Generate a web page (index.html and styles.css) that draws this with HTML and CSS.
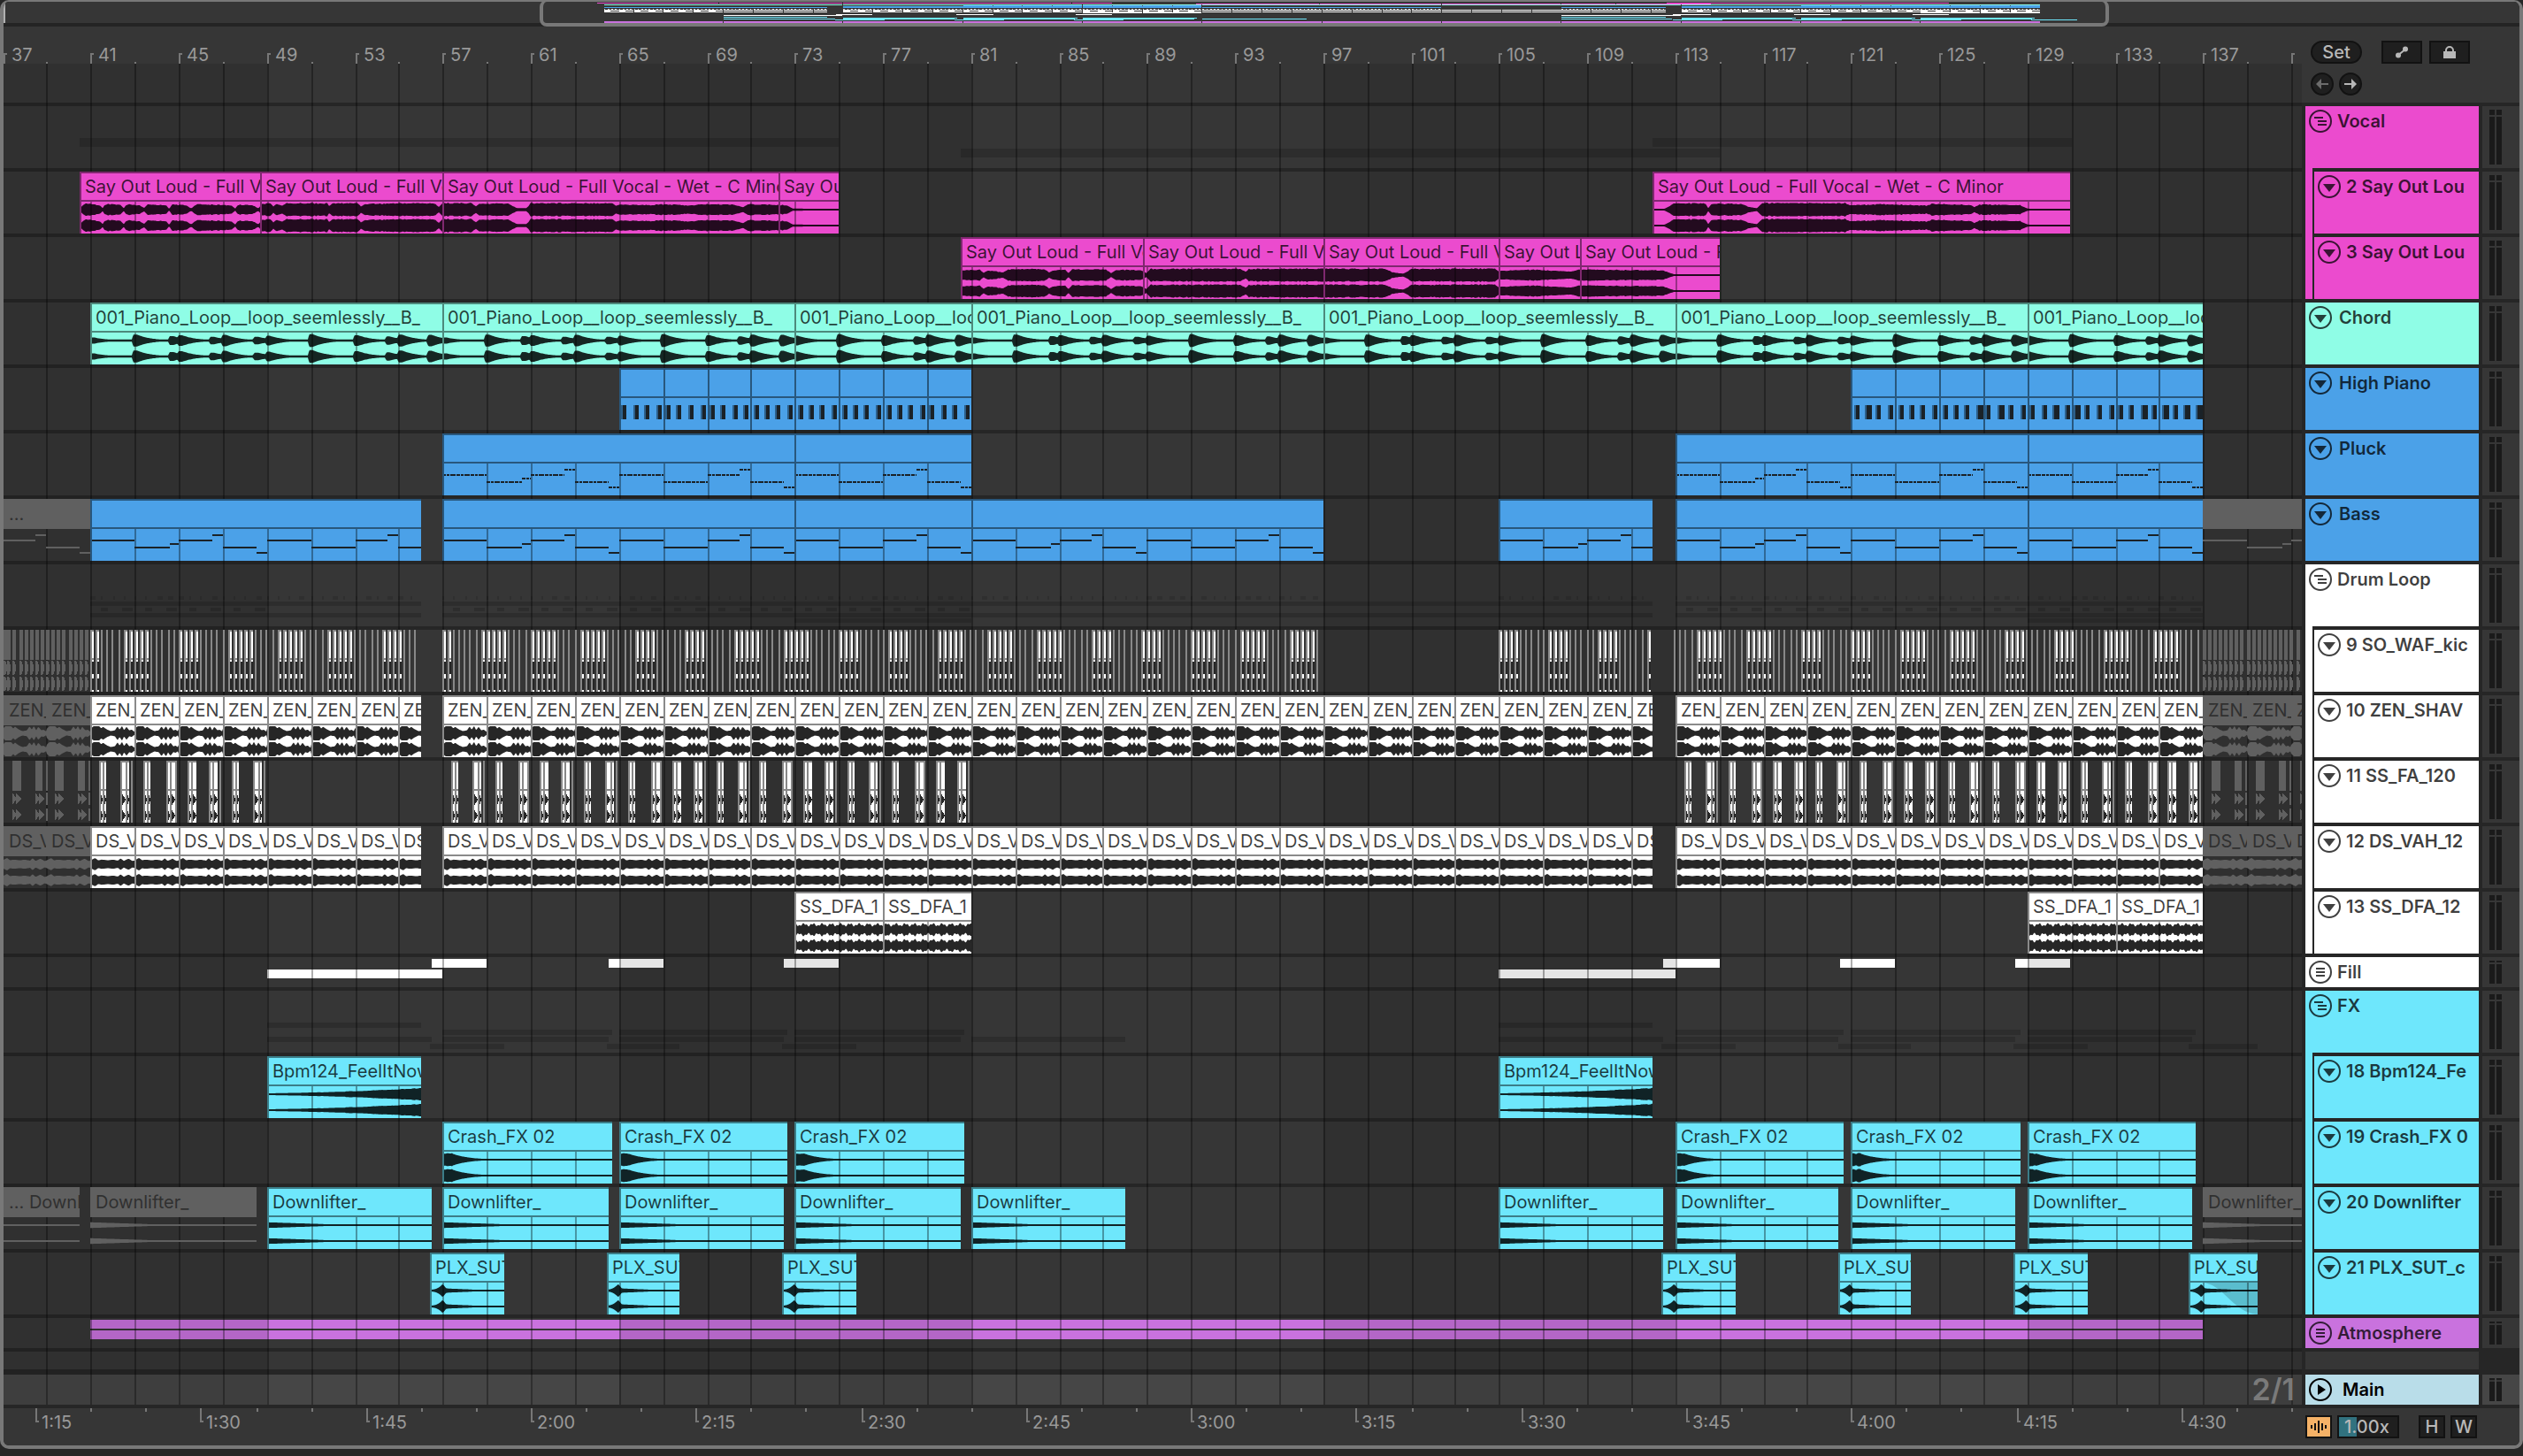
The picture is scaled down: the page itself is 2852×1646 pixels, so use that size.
FILE: index.html
```html
<!DOCTYPE html>
<html lang="en">
<head>
<meta charset="utf-8">
<title>Arrangement</title>
<link rel="stylesheet" href="styles.css">
</head>
<body>
<svg class="symbols" aria-hidden="true">
  <symbol id="i-group" viewBox="0 0 26 26"><circle cx="13" cy="13" r="12"/><path d="M6 9h10M10 13h10M10 17h10"/></symbol>
  <symbol id="i-folded" viewBox="0 0 26 26"><circle cx="13" cy="13" r="12"/><path d="M8 9h10M8 13h10M8 17h10"/></symbol>
  <symbol id="i-open" viewBox="0 0 26 26"><circle cx="13" cy="13" r="12"/><path class="solid" d="M6 10h14l-7 9z"/></symbol>
  <symbol id="i-play" viewBox="0 0 26 26"><circle cx="13" cy="13" r="12"/><path class="solid" d="M10 7v12l9-6z"/></symbol>
</svg>

<main class="frame">
  <section class="overview" aria-label="Overview">
    <svg class="overview-map" id="overview" viewBox="0 0 2844 24" preserveAspectRatio="none" shape-rendering="crispEdges"></svg>
    <div class="overview-window"></div>
  </section>

  <section class="top">
    <div class="top-timeline">
      <div class="ruler bars" id="bar-ruler"></div>
      <div class="scrub" data-grid></div>
    </div>
    <div class="controls">
      <div class="control-row">
        <button class="pill" type="button">Set</button>
        <button class="box automation" type="button" aria-label="Automation mode">
          <svg viewBox="0 0 16 14" width="16" height="14"><path d="M3 11L13 3" stroke="currentColor" stroke-width="2"/><circle cx="4" cy="10.500" r="3"/><circle cx="12" cy="3.500" r="3"/></svg>
        </button>
        <button class="box lock" type="button" aria-label="Lock envelopes">
          <svg viewBox="0 0 16 14" width="16" height="14"><path d="M4 7V5a4 4 0 0 1 8 0v2" fill="none" stroke="currentColor" stroke-width="2"/><path d="M1 6h14v8H1z"/></svg>
        </button>
      </div>
      <div class="control-row arrows">
        <button class="round dim" type="button" aria-label="Previous locator">
          <svg viewBox="0 0 16 14" width="16" height="14"><path d="M7 1v12L1 7z"/><path d="M6 6h9v2H6z"/></svg>
        </button>
        <button class="round" type="button" aria-label="Next locator">
          <svg viewBox="0 0 16 14" width="16" height="14"><path d="M9 1v12l6-6z"/><path d="M1 6h9v2H1z"/></svg>
        </button>
      </div>
    </div>
  </section>

  <section class="tracks" id="tracks">
    <div class="grid" data-grid></div>
  </section>

  <section class="bottom">
    <div class="ruler times" id="time-ruler"></div>
    <div class="footer-controls">
      <button class="box wave-toggle" type="button" aria-label="Waveform zoom">
        <svg viewBox="0 0 20 16" width="20" height="16"><path d="M2 6v4M6 4v8M10 1v14M14 4v8M18 6v4" stroke="#111" stroke-width="2"/></svg>
      </button>
      <input class="box speed" type="text" value="1.00x" aria-label="Waveform vertical zoom">
      <button class="box letter h" type="button">H</button>
      <button class="box letter" type="button">W</button>
    </div>
  </section>
</main>
<script src="app.js"></script>
</body>
</html>
```
FILE: styles.css
```css
* { box-sizing: border-box; }

body {
  margin: 0;
  background: #262626;
  color: #b8b8b8;
  font: 400 20px/28px Inter, "Liberation Sans", sans-serif;
}

button, input { font: inherit; color: inherit; padding: 0; margin: 0; }

.symbols { position: absolute; width: 0; height: 0; }

.frame {
  display: flex;
  flex-direction: column;
  border: 4px solid #787878;
  border-top-width: 2px;
  border-radius: 10px;
  background: #262626;
  overflow: hidden;
}

/* overview strip */
.overview {
  position: relative;
  height: 28px;
  background: #363636;
  border-bottom: 4px solid #242424;
}
.overview-map { display: block; width: 100%; height: 24px; border-left: 2px solid #b0b0b0; }
.overview-window {
  position: absolute;
  top: -2px;
  bottom: -4px;
  left: 21.3%;
  right: 16.3%;
  border: 4px solid #787878;
  border-top-width: 2px;
  border-radius: 8px;
}

/* rulers and top controls */
.top, .bottom { display: grid; grid-template-columns: 1fr 246px; background: #363636; }
.ruler { position: relative; height: 42px; overflow: hidden; color: #999; }
.tick { position: absolute; width: 4px; pointer-events: none; }
.tick.minor { width: 2px; background: #777; }
.bars .tick { bottom: 0; height: 12px; border-left: 2px solid #777; border-top: 2px solid #777; }
.bars .tick.minor { height: 2px; border: 0; }
.times .tick { top: 0; height: 16px; border-left: 2px solid #777; border-bottom: 2px solid #777; }
.times .tick.minor { height: 4px; border: 0; }
.tick-label { position: absolute; line-height: 24px; white-space: nowrap; }
.bars .tick-label { top: 20px; margin-left: 9px; }
.times .tick-label { top: 4px; margin-left: 7px; }

.scrub { position: relative; height: 44px; overflow: hidden; background: #363636; }

.controls { display: flex; flex-direction: column; gap: 10px; padding: 16px 0 0 10px; }
.control-row { display: flex; gap: 8px; }
.control-row.arrows { gap: 6px; }
.pill, .round, .box {
  display: inline-flex;
  align-items: center;
  justify-content: center;
  height: 26px;
  border: 2px solid #121212;
  background: #1f1f1f;
  line-height: 22px;
}
.pill { width: 58px; border-radius: 13px; font-weight: 500; margin-right: 14px; }
.round { width: 26px; border-radius: 13px; }
.box { width: 46px; }
.dim { color: #6c6c6c; }
.controls svg { fill: currentColor; }

/* tracks */
.tracks { position: relative; display: flex; flex-direction: column; gap: 4px; padding: 4px 0; background: #262626; }
.grid { position: absolute; z-index: 1; top: 0; bottom: 4px; left: 0; right: 246px; overflow: hidden; pointer-events: none; }
.band { position: absolute; top: 0; bottom: 0; background: rgba(0, 0, 0, .1); }
.line { position: absolute; top: 0; bottom: 0; width: 2px; background: rgba(0, 0, 0, .32); }

.track { display: grid; grid-template-columns: 1fr 196px 42px; column-gap: 4px; height: 70px; }
.track.small { height: 34px; }
.track.spacer { height: 20px; }
.track.main { margin-top: 2px; }

.lane { position: relative; overflow: hidden; background: #363636; }
.main .lane { background: #464646; }
.lane > svg { display: block; width: 100%; height: 100%; position: relative; z-index: 2; }
.lane > svg.under { z-index: 0; }
.zoom-label { position: absolute; z-index: 2; right: 8px; top: 0; font-size: 34px; line-height: 34px; font-weight: 600; color: #7a7a7a; }

.head { position: relative; display: flex; align-items: flex-start; gap: 8px; padding: 4px; background: var(--c); color: rgba(0, 0, 0, .75); white-space: nowrap; }
.head.group { gap: 6px; }
.head.child { gap: 6px; margin-left: 10px; }
.head.child::before { content: ""; position: absolute; left: -10px; top: -4px; bottom: 0; width: 8px; background: var(--c); }
.head .name { overflow: hidden; font-weight: 600; line-height: 26px; }
.main .head { color: #000; gap: 12px; }
.fold { flex: none; width: 26px; height: 26px; border: 0; background: none; }
.fold svg { display: block; width: 26px; height: 26px; fill: none; stroke: currentColor; stroke-width: 2; }
.solid { fill: currentColor; stroke: none; }
.spacer .head { background: #363636; }

.meter { display: flex; gap: 2px; padding: 4px 8px; background: #363636; }
.meter i { width: 6px; background: linear-gradient(#1a1a1a 6px, #363636 6px, #363636 8px, #1a1a1a 8px); }
.small .meter i { background: linear-gradient(#1a1a1a 2px, #363636 2px, #363636 4px, #1a1a1a 4px); }
.main .meter { background: #464646; }

/* clips */
.clip {
  position: absolute;
  z-index: 2;
  top: 0;
  bottom: 0;
  display: grid;
  grid-template-rows: 32px 1fr;
  overflow: hidden;
  background: var(--c);
  border-left: 2px solid rgba(0, 0, 0, .46);
  border-top: 2px solid rgba(0, 0, 0, .46);
}
.clip-name {
  padding-left: 4px;
  border-bottom: 2px solid rgba(0, 0, 0, .46);
  color: rgba(0, 0, 0, .75);
  line-height: 30px;
  white-space: nowrap;
  overflow: hidden;
}
.clip svg { display: block; width: 100%; height: 36px; }
.clip.muted { background: none; border: 0; grid-template-rows: 34px 1fr; }
.clip.muted .clip-name { background: #606060; border: 0; color: #303030; padding-left: 6px; line-height: 34px; }

/* footer */
.footer-controls { display: flex; gap: 6px; padding: 8px 0 0 4px; }
.wave-toggle { width: 30px; background: #f5b267; }
.speed { width: 70px; padding-left: 6px; font-weight: 500; background: linear-gradient(90deg, #31727f 20px, #1f1f1f 20px); }
.letter { width: 30px; font-weight: 500; }
.letter.h { margin-left: 16px; }
```
FILE: app.js
```js
// Horizontal scale: lane units at the design width of the timeline.
const LANE = 2598;
const BAR = 24.875;
const ORIGIN = 98.5;
const FIRST = 37;
const LAST = 142;

const raw = bar => ORIGIN + (bar - 41) * BAR;
const at = bar => Math.min(LANE, Math.max(0, Math.round(raw(bar) / 2) * 2));
const pct = x => (x / LANE * 100).toFixed(4) + '%';

const PINK = '#eb4bce', MINT = '#8ffde6', BLUE = '#4ba1e8', WHITE = '#ffffff', CYAN = '#6ee7fc', PURPLE = '#c972de';

// Deterministic noise in 0..1
const noise = n => { const s = Math.sin(n * 12.9898) * 43758.5453; return s - Math.floor(s); };

const interp = (points, x) => {
  if (x <= points[0][0]) return points[0][1];
  for (let i = 1; i < points.length; i++) {
    if (x <= points[i][0]) {
      const [x0, y0] = points[i - 1], [x1, y1] = points[i];
      return y0 + (y1 - y0) * (x - x0) / (x1 - x0);
    }
  }
  return points[points.length - 1][1];
};

const rough = (v, x, k) => v < .25 ? v : v * (1 - k * noise(Math.round(x / 2)));

const VOCAL = [
  [90,.1],[94,.7],[97,.85],[106,.8],[113,.6],[116,.2],[118,.6],[122,.8],[136,.7],[140,.2],[142,.6],[146,.75],[158,.6],[163,.25],
  [167,.75],[188,.65],[191,.15],[195,.75],[210,.65],[216,.2],[222,.75],[238,.75],[262,.6],[266,.15],[269,.7],[285,.7],[292,.2],
  [296,.85],[306,.9],[309,.5],[312,.85],[318,.6],[324,.9],[352,.95],[370,.9],[372,.6],[376,.9],[404,.95],[408,.5],[414,.85],
  [470,.95],[492,.9],[496,.4],[500,.95],[533,.95],[538,.5],[542,.85],[574,.9],[580,.5],[585,.2],[595,.2],[600,.95],[692,.95],
  [696,.55],[700,.75],[736,.65],[745,.8],[785,.6],[792,.8],[830,.75],[840,.35],[846,.8],[890,.65],[896,.15],[948,.1]];
const VOCAL_B = [
  [1086,.7],[1107,.8],[1112,.35],[1117,.7],[1134,.4],[1141,.85],[1180,.9],[1186,.4],[1190,.7],[1204,.8],[1208,.3],[1212,.85],
  [1250,.8],[1256,.3],[1262,.8],[1290,.7],[1296,.3],[1300,.9],[1402,.95],[1408,.5],[1412,.9],[1496,.95],[1566,.9],[1574,.4],
  [1586,.2],[1596,.9],[1690,.95],[1694,.6],[1730,.8],[1776,.5],[1784,.8],[1880,.7],[1892,.12],[1944,.1]];
const VOCAL_C = [
  [1868,.1],[1882,.14],[1893,.95],[1928,.9],[1931,.2],[1935,.85],[1968,.85],[1977,.4],[1986,.2],[1992,.95],[2086,.95],
  [2090,.65],[2130,.8],[2178,.6],[2184,.85],[2228,.7],[2232,.35],[2238,.75],[2284,.65],[2292,.14],[2340,.1]];
const CHORD_HITS = [[0,.5],[1.95,.95],[3.6,.7],[4,.85],[5.45,.6],[6,.9],[7.45,.6],[8,.75],[9.95,1],[12,.85],[13.45,.65],[14,.95],[15.35,.9]];
const ZEN = [[0,.6],[.12,.95],[.4,.95],[.48,.65],[.56,.9],[.72,.55],[.9,.3],[1.1,.4],[1.22,.95],[1.32,.5],[1.42,1],[1.52,.4],[1.62,.9],[1.76,.4],[1.86,.5],[2,.2]];
const DS = [[0,.6],[.2,.95],[.34,.6],[.5,.7],[.8,.6],[1,.7],[1.25,.55],[1.36,.9],[1.5,.5],[1.72,.85],[1.9,.5],[2,.55]];

const vocal = points => b => { const x = raw(b) + 4; return rough(interp(points, x), x, .15) * .92; };

// Amplitude at a bar position, for each kind of sample
const WAVES = {
  vocal: vocal(VOCAL),
  vocalB: vocal(VOCAL_B),
  vocalC: vocal(VOCAL_C),
  chord: (b, clip) => {
    const p = ((b - clip.from + (clip.offset || 0)) % 16 + 16) % 16;
    return CHORD_HITS.reduce((m, [h, a]) => {
      const d = p - h;
      if (d < -.08) return m;
      const v = d < 0 ? 1 + d * 8 : d < .15 ? 1 : Math.exp(-(d - .15) * 1.6);
      return Math.max(m, a * .8 * v);
    }, .13);
  },
  zen: b => interp(ZEN, (b - 1) % 2) * .92,
  ds: b => interp(DS, (b - 1) % 2) * .82,
  dfa: b => .62 + .14 * Math.sin(b * 15) + .1 * Math.sin(b * 37 + 1),
  rise: (b, c) => { const t = (b - c.from) / 7; return rough(.12 + .7 * Math.pow(t, 1.6), b * 12, .12); },
  crash: (b, c) => { const t = b - c.from; return t < .45 ? .85 - .12 * noise(Math.round(b * 9)) : Math.max(.12, .75 * Math.exp(-(t - .45) * 1.4)); },
  down: (b, c) => { const t = b - c.from; return Math.max(.12, .36 - t * .09); },
  plx: (b, c) => { const t = b - c.from; return t < .55 ? .12 + .7 * Math.pow(t / .55, 2.5) : Math.max(.12, t < .72 ? .82 - (t - .55) * 3.2 : .27 - (t - .72) * .12); },
  tail: () => .1
};

// Rows of the two-bar note pattern: start, end, height
const NOTES = [
  [0,2,12],[2,3.6,20],[3.6,4,16],[4,5.5,12],[5.5,6,6],[6,7.5,20],[7.5,8,26],
  [8,10,12],[10,12,20],[12,13.5,12],[13.5,14,6],[14,15.5,20],[15.5,16,26]];

const series = (from, to, step, props) => {
  const list = [];
  for (let b = from; b < to; b += step) list.push({ from: b, to: Math.min(b + step, to), ...props });
  return list;
};
const cut = (points, props) => points.slice(1).map((to, i) => ({ from: points[i], to, ...props }));

const VOX = 'Say Out Loud - Full Vocal - Wet - C Minor';
const loops = (name, wave) => [
  ...series(37, 41, 2, { name, wave, muted: true }), ...series(41, 56, 2, { name, wave }),
  ...series(57, 112, 2, { name, wave }), ...series(113, 137, 2, { name, wave }),
  ...series(137, LAST, 2, { name, wave, muted: true })];
const crash = [57, 65, 73, 113, 121, 129].map(b => ({ from: b, to: b + 7.67, name: 'Crash_FX 02', wave: 'crash' }));
const down = [[49,56.5],[57,64.5],[65,72.5],[73,80.5],[81,88],[105,112.45],[113,120.45],[121,128.45],[129,136.5]]
  .map(([from, to]) => ({ from, to, name: 'Downlifter_', wave: 'down' }));
const plx = [56.44, 64.42, 72.42, 112.4, 120.38, 128.4].map(b => ({ from: b, to: b + 3.37, name: 'PLX_SUT', wave: 'plx' }));

const TRACKS = [
  { name: 'Vocal', color: PINK, kind: 'group', icon: 'group' },
  { name: '2 Say Out Lou', color: PINK, kind: 'child', y: 1, clips: [
    ...cut([40.52, 48.72, 57, 72.28, 75], { name: VOX, wave: 'vocal' }),
    { from: 112, to: 130.95, name: VOX, wave: 'vocalC' }] },
  { name: '3 Say Out Lou', color: PINK, kind: 'child', y: 2, clips: cut([80.56, 88.85, 97, 104.97, 108.64, 115], { name: VOX, wave: 'vocalB' }) },
  { name: 'Chord', color: MINT, y: 3, clips: cut([41, 57, 73, 81, 97, 113, 129, 137], { name: '001_Piano_Loop__loop_seemlessly__B_', wave: 'chord' }) },
  { name: 'High Piano', color: BLUE, y: 4, clips: [...series(65, 81, 2, { keys: true }), ...series(121, 137, 2, { keys: true })] },
  { name: 'Pluck', color: BLUE, y: 5, clips: [
    ...cut([57, 73], { notes: 'dash' }), { from: 73, to: 81, notes: 'dash', offset: 8 },
    { from: 113, to: 129, notes: 'dash' }, { from: 129, to: 137, notes: 'dash', offset: 8 }] },
  { name: 'Bass', color: BLUE, y: 6, clips: [
    { from: 37, to: 41, notes: 'line', offset: 12, muted: true, name: '...' },
    { from: 41, to: 56, notes: 'line' }, { from: 57, to: 73, notes: 'line' }, { from: 73, to: 81, notes: 'line', offset: 8 },
    { from: 81, to: 97, notes: 'line' }, { from: 105, to: 112, notes: 'line' }, { from: 113, to: 129, notes: 'line' },
    { from: 129, to: 137, notes: 'line', offset: 8 }, { from: 137, to: LAST, notes: 'line', muted: true }] },
  { name: 'Drum Loop', color: WHITE, kind: 'group', icon: 'group' },
  { name: '9 SO_WAF_kic', color: WHITE, kind: 'child', y: 8, draw: 'kick' },
  { name: '10 ZEN_SHAV', color: WHITE, kind: 'child', y: 9, clips: loops('ZEN_', 'zen') },
  { name: '11 SS_FA_120', color: WHITE, kind: 'child', y: 10, draw: 'fills' },
  { name: '12 DS_VAH_12', color: WHITE, kind: 'child', y: 11, clips: loops('DS_V', 'ds') },
  { name: '13 SS_DFA_12', color: WHITE, kind: 'child', y: 12, clips: [...series(73, 81, 4, { name: 'SS_DFA_1', wave: 'dfa' }), ...series(129, 137, 4, { name: 'SS_DFA_1', wave: 'dfa' })] },
  { name: 'Fill', color: WHITE, kind: 'group', icon: 'folded', small: true, stripes: [
    [2, 56.5, 59], [2, 64.56, 67.05], [2, 72.5, 75], [2, 112.45, 115], [2, 120.5, 123], [2, 128.45, 130.95], [14, 49, 57], [14, 105, 113]] },
  { name: 'FX', color: CYAN, kind: 'group', icon: 'group' },
  { name: '18 Bpm124_Fe', color: CYAN, kind: 'child', y: 17, clips: [49, 105].map(b => ({ from: b, to: b + 7, name: 'Bpm124_FeelItNow', wave: 'rise' })) },
  { name: '19 Crash_FX 0', color: CYAN, kind: 'child', y: 18, clips: crash },
  { name: '20 Downlifter', color: CYAN, kind: 'child', y: 19, clips: [
    { from: 37, to: 40.52, name: '... Downlifter_', wave: 'tail', muted: true },
    { from: 41, to: 48.56, name: 'Downlifter_', wave: 'down', muted: true },
    ...down, { from: 137, to: LAST, name: 'Downlifter_', wave: 'down', muted: true }] },
  { name: '21 PLX_SUT_c', color: CYAN, kind: 'child', y: 20, clips: [...plx, { from: 136.36, to: 139.5, name: 'PLX_SUT', wave: 'plx', fade: true }] },
  { name: 'Atmosphere', color: PURPLE, kind: 'group', icon: 'folded', small: true, stripes: [[2, 41, 137], [14, 41, 137]] },
  { spacer: true },
  { name: 'Main', color: '#b9dde9', icon: 'play', small: true, main: true }
];

const rect = (x, y, w, h, fill) => `<rect x="${x}" y="${y}" width="${w}" height="${h}" fill="${fill}"/>`;

// Bar lines that fall strictly inside a span
const innerLines = (x0, x1) => {
  let out = '';
  for (let b = FIRST; b < LAST; b += 2) if (at(b) > x0 && at(b) < x1) out += rect(at(b) - x0, 0, 2, 36, 'rgba(0,0,0,.35)');
  return out;
};

const waveform = (clip, x0, x1, fill) => {
  let out = '';
  for (const mid of [9, 27]) {
    const top = [], low = [];
    for (let x = x0; x <= x1; x += 1) {
      const b = 41 + (x - ORIGIN) / BAR;
      const a = Math.max(1, WAVES[clip.wave](b, clip) * 9);
      top.push(`${x - x0} ${(mid - a).toFixed(1)}`);
      low.unshift(`${x - x0} ${(mid + a).toFixed(1)}`);
    }
    out += `<path fill="${fill}" d="M${top.concat(low).join('L')}Z"/>`;
  }
  return out;
};

const notes = (clip, x0, fill) => {
  let out = '';
  const start = clip.offset || 0;
  for (let base = 0; base < 32; base += 16) {
    for (const [a, b, y] of NOTES) {
      const from = clip.from + base + a - start, to = clip.from + base + b - start;
      if (from < clip.from || from >= clip.to) continue;
      const x = at(from) - x0, end = at(Math.min(to, clip.to)) - x0;
      if (clip.notes === 'dash') out += `<path d="M${x} ${y + 1}H${end}" stroke="${fill}" stroke-width="2" stroke-dasharray="4 1 3 1 6 1"/>`;
      else out += rect(x, y, end - x, 2, fill);
    }
  }
  return out;
};

const keys = (clip, x0) => {
  let out = '';
  [.25, .75, 1.25, 1.8].forEach((p, i) => {
    const x = Math.floor((raw(clip.from + p) - x0) / 2) * 2;
    const w = noise(clip.from + i) > .8 ? 8 : 6;
    out += rect(x - 2, 8, 2, 16, 'rgba(0,0,0,.4)') + rect(x, 8, w - 2, 16, '#1a2228');
  });
  return out;
};

const clipHTML = (clip, color) => {
  const x0 = at(clip.from), x1 = at(clip.to), inset = clip.muted ? 0 : 2, o = x0 + inset;
  const ink = clip.muted ? '#606060' : 'rgba(0,0,0,.85)';
  let art = '';
  if (!clip.muted) art += innerLines(o, x1);
  if (clip.wave) art += waveform(clip, o, x1, ink);
  if (clip.notes) art += notes(clip, o, clip.muted ? '#606060' : '#1a2228');
  if (clip.keys) art += keys(clip, o);
  if (clip.fade) art += `<path fill="rgba(0,0,0,.18)" d="M14 0C38 2 48 34 76 36V0Z"/>`;
  const w = x1 - o;
  return `<div class="clip${clip.muted ? ' muted' : ''}" style="left:${pct(x0)};width:${pct(x1 - x0)};--c:${color}">` +
    `<div class="clip-name">${clip.name || ''}</div>` +
    `<svg viewBox="0 0 ${w} 36" preserveAspectRatio="none">${art}</svg></div>`;
};

// Single-hit tracks: quarter-bar kicks and short fills
const DRAW = {
  kick() {
    // the hits run a touch slower than the grid, which spreads the wide ones out
    const hit = b => 98 + (b - 41) * 24.868;
    let out = '';
    for (const [from, to, muted] of [[37, 41, true], [41, 56], [57, 97], [105, 112], [113, 137], [137, LAST, true]]) {
      for (let b = from; b < to; b += .25) {
        const x = Math.max(0, Math.round(hit(b) / 2) * 2);
        const f = ((hit(b) % 2) + 2) % 2;
        const wide = f >= 1.3 || f <= .3;
        if (muted) {
          out += rect(x, 0, 4, 34, '#606060');
          out += `<path fill="#606060" d="M${x} 35h2q4 8 0 16h-2zM${x} 53h2q4 8 0 16h-2z"/>`;
        } else {
          out += rect(x, 0, 2, 70, '#888');
          if (wide) out += rect(x + 2, 0, 2, 70, '#fff') + rect(x + 2, 0, 2, 2, '#888') + rect(x + 2, 32, 2, 2, '#888') +
            rect(x + 2, 36, 2, 14, '#262626') + rect(x + 2, 55, 2, 13, '#262626');
        }
      }
    }
    return out;
  },
  fills() {
    let out = '';
    for (const [from, to, muted] of [[37, 41, true], [41, 49], [57, 81], [113, 137], [137, LAST, true]]) {
      for (let b = from; b < to; b += 2) {
        const x = at(b);
        if (muted) {
          for (const [o, w] of [[10, 10], [36, 8], [48, 2]]) {
            out += rect(x + o, 0, w, 34, '#606060');
            for (const y of [36, 54]) {
              out += w > 2 ? `<path fill="#606060" d="M${x + o} ${y}l5 7l-5 7zM${x + o + 4} ${y}l6 7l-6 7z"/>` : rect(x + o, y, 2, 14, '#606060');
            }
          }
          continue;
        }
        const flip = ((b - from) / 2) % 3;
        for (const [o, w, v] of [[10, 8 + (flip === 2 ? 2 : 0), 4], [flip === 1 ? 36 : 34, 10, flip ? 4 : 6]]) {
          out += rect(x + o, 0, w, 70, '#fff') + rect(x + o, 0, w, 2, '#888') + rect(x + o, 32, w, 2, '#888');
          out += rect(x + o, 0, 2, 70, '#888') + rect(x + o + v, 0, 2, 70, '#888');
          for (const y of [44, 62]) {
            out += `<path fill="#262626" d="M${x + o + 2} ${y - 7}l${v - 2} 7l-${v - 2} 7zM${x + o + v + 2} ${y - 7}l${w - v - 2} 7l-${w - v - 2} 7z"/>`;
          }
        }
        out += rect(x + 46, 0, 2, 70, '#888');
      }
    }
    return out;
  }
};

// Faint summary of the children shown inside an unfolded group lane
const shade = (a, b, y, h) => rect(at(a), y, at(b) - at(a), h, 'rgba(0,0,0,.15)');
const SUMMARY = {
  'Vocal': () => shade(40.52, 75, 36, 10) + shade(112, 131, 36, 10) + shade(80.56, 115, 48, 10),
  'Drum Loop': () => {
    let out = '';
    for (const [a, b] of [[41, 56], [57, 97], [105, 112], [113, 137]]) {
      for (let p = a; p < b; p += .5) out += rect(at(p), 36, noise(p) > .6 ? 6 : 2, 4, 'rgba(0,0,0,.12)');
    }
    for (const [a, b] of [[41, 56], [57, 112], [113, 137]]) out += shade(a, b, 42, 5) + shade(a, b, 55, 5);
    for (const [a, b] of [[41, 49], [57, 81], [113, 137]]) {
      for (let p = a; p < b; p += 2) out += rect(at(p) + 12, 49, 8, 4, 'rgba(0,0,0,.15)') + rect(at(p) + 36, 49, 12, 4, 'rgba(0,0,0,.15)');
    }
    return out + shade(73, 81, 61, 5) + shade(129, 137, 61, 5);
  },
  'FX': () => shade(49, 56, 36, 6) + shade(105, 112, 36, 6) +
    crash.map(c => shade(c.from, c.to, 44, 6)).join('') +
    down.map(c => shade(c.from, c.to, 52, 6)).join('') +
    plx.map(c => shade(c.from, c.to, 60, 6)).join('') + shade(136.36, 139.5, 60, 6)
};

const laneSVG = (body, cls = '') => `<svg class="${cls}" viewBox="0 0 ${LANE} 70" preserveAspectRatio="none" shape-rendering="crispEdges">${body}</svg>`;

function buildTrack(t) {
  const row = document.createElement('div');
  row.className = ['track', t.small && 'small', t.main && 'main', t.spacer && 'spacer'].filter(Boolean).join(' ');
  let lane = '';
  if (t.clips) lane = t.clips.map(c => clipHTML({ offset: t.name === 'Chord' && (c.from === 73 || c.from === 129) ? 8 : 0, ...c }, t.color)).join('');
  if (t.draw) lane = laneSVG(DRAW[t.draw]());
  if (SUMMARY[t.name]) lane = laneSVG(SUMMARY[t.name]());
  if (t.stripes) {
    lane = `<svg class="under" viewBox="0 0 ${LANE} 34" preserveAspectRatio="none" shape-rendering="crispEdges">` +
      t.stripes.map(([y, a, b]) => rect(at(a), y, at(b) - at(a), 10, t.color)).join('') + '</svg>';
  }
  if (t.main) lane = '<span class="zoom-label">2/1</span>';
  const head = t.spacer ? '<div class="head"></div><div></div>' :
    `<div class="head ${t.kind || ''}" style="--c:${t.color}"><button class="fold" type="button" aria-label="${t.name}">` +
    `<svg><use href="#i-${t.icon || 'open'}"/></svg></button><span class="name">${t.name}</span></div>` +
    '<div class="meter"><i></i><i></i></div>';
  row.innerHTML = `<div class="lane">${lane}</div>${head}`;
  document.getElementById('tracks').append(row);
}

function buildGrids() {
  let html = '';
  for (const [a, b] of [[37, 49], [65, 81], [97, 113], [129, LAST]]) {
    html += `<div class="band" style="left:${pct(at(a))};width:${pct(at(b) - at(a))}"></div>`;
  }
  for (let b = FIRST + 2; b < LAST; b += 2) html += `<div class="line" style="left:${pct(at(b))}"></div>`;
  document.querySelectorAll('[data-grid]').forEach(el => { el.innerHTML = html; });
}

function buildRulers() {
  let bars = '';
  for (let b = FIRST; b < LAST; b += 2) {
    const major = (b - 1) % 4 === 0;
    bars += `<span class="tick${major ? '' : ' minor'}" style="left:${pct(at(b))}"></span>`;
    if (major && b < 141) bars += `<span class="tick-label" style="left:${pct(at(b))}">${b}</span>`;
  }
  document.getElementById('bar-ruler').innerHTML = bars;

  let times = '';
  for (let s = 75; s <= 280; s += 5) {
    const x = pct(at(1 + s / 2));
    const major = s % 15 === 0;
    times += `<span class="tick${major ? '' : ' minor'}" style="left:${x}"></span>`;
    if (major) times += `<span class="tick-label" style="left:${x}">${Math.floor(s / 60)}:${String(s % 60).padStart(2, '0')}</span>`;
  }
  document.getElementById('time-ruler').innerHTML = times;
}

function buildOverview() {
  const mx = b => (b - 1) * 16.93;
  const bar = (a, b, y, h, c) => rect(mx(a).toFixed(1), y, Math.max(1, mx(b) - mx(a) - 1).toFixed(1), h, c);
  let out = '';
  for (const t of TRACKS) {
    if (t.clips) for (const c of t.clips) if (!c.muted) out += bar(c.from, c.to, t.y, 1, t.color);
  }
  for (const [a, b] of [[41, 56], [57, 97], [105, 112], [113, 137]]) for (let p = a; p < b; p += .25) out += bar(p, p + .16, 8, 1, '#ccc');
  for (const [a, b] of [[41, 49], [57, 81], [113, 137]]) for (let p = a; p < b; p += 1) out += bar(p, p + .5, 10, 1, '#fff');
  for (const [y, a, b] of TRACKS.find(t => t.name === 'Fill').stripes) out += bar(a, b, y === 2 ? 14 : 15, 1, '#fff');
  for (let p = 41; p < 137; p += 8) out += bar(p, p + 8, 22, 2, PURPLE);
  document.getElementById('overview').innerHTML = out;
}

TRACKS.forEach(buildTrack);
buildGrids();
buildRulers();
buildOverview();
```
